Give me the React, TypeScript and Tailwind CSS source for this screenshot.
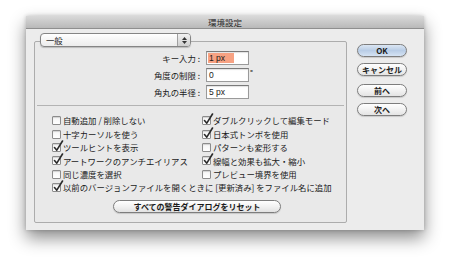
import React from 'react';

const font = { fontFamily: '"Noto Sans CJK JP", "Noto Sans", sans-serif' };

const leftChecks = [
  { label: '自動追加 / 削除しない', on: false },
  { label: '十字カーソルを使う', on: false },
  { label: 'ツールヒントを表示', on: true },
  { label: 'アートワークのアンチエイリアス', on: true },
  { label: '同じ濃度を選択', on: false },
];

const rightChecks = [
  { label: 'ダブルクリックして編集モード', on: true },
  { label: '日本式トンボを使用', on: true },
  { label: 'パターンも変形する', on: false },
  { label: '線幅と効果も拡大・縮小', on: true },
  { label: 'プレビュー境界を使用', on: false },
];

function Checkbox({ on }: { on: boolean }) {
  return (
    <span className="relative w-[9px] h-[9px] shrink-0 rounded-[1px] border border-[#8c8c8c] bg-gradient-to-b from-[#f4f4f4] to-white shadow-[inset_0_1px_1px_rgba(0,0,0,0.15)]">
      {on && (
        <svg className="absolute left-[0px] top-[-4px]" width="11" height="12" viewBox="0 0 11 12">
          <path d="M1.5 7.5 L3.8 10.2 L9.5 1" fill="none" stroke="#2a2a2a" strokeWidth="1.6" strokeLinecap="round" strokeLinejoin="round" />
        </svg>
      )}
    </span>
  );
}

function CheckRow({ label, on }: { label: string; on: boolean }) {
  return (
    <div className="h-[13.4px] flex items-center gap-[2px]">
      <Checkbox on={on} />
      <span className="leading-none whitespace-nowrap">{label}</span>
    </div>
  );
}

function PillButton({ children, primary }: { children: React.ReactNode; primary?: boolean }) {
  return (
    <div
      className={`w-[50px] h-[13px] rounded-full border border-[#7d7d7d] flex items-center justify-center text-[8px] font-bold leading-none text-[#1c1c1c] shadow-[0_1px_1px_rgba(0,0,0,0.15)] ${
        primary ? 'bg-gradient-to-b from-[#dbe6f3] via-[#b9cde6] to-[#d5e3f3]' : 'bg-gradient-to-b from-white via-[#f2f2f2] to-[#e4e4e4]'
      }`}
    >
      {children}
    </div>
  );
}

function Field({ label, value, selected, suffix }: { label: string; value: string; selected?: boolean; suffix?: string }) {
  return (
    <div className="h-[14px] flex items-center">
      <span className="w-[165px] mr-[6px] text-right leading-none whitespace-nowrap">{label}</span>
      <div className="w-[43px] h-[14px] bg-white border border-[#9a9a9a] border-t-[#7a7a7a] flex items-center pl-[1px] shadow-[inset_0_1px_1px_rgba(0,0,0,0.12)]">
        <span className={`leading-none px-[1px] py-[1px] text-[8.5px] ${selected ? 'bg-[#f7a283]' : ''}`} style={{ fontFamily: '"Liberation Sans", sans-serif' }}>
          {selected ? <span className="pr-[8px]">{value}</span> : value}
        </span>
      </div>
      {suffix && <span className="ml-[1px] leading-none text-[8px] -mt-[5px]">{suffix}</span>}
    </div>
  );
}

export default function App() {
  return (
    <div className="w-[450px] h-[266px] bg-white pl-[26px] pt-[16px] text-[8.4px] text-[#1a1a1a]" style={font}>
      <div className="w-[398px] h-[214px] bg-[#ececec] flex flex-col shadow-[0_8px_16px_rgba(0,0,0,0.45),0_0_4px_rgba(0,0,0,0.2)]">
        <div className="h-[13px] shrink-0 bg-gradient-to-b from-[#d9d9d9] to-[#b9b9b9] border-b border-[#8f8f8f] flex items-center justify-center">
          <span className="leading-none text-[8.5px] text-[#2a2a2a]">環境設定</span>
        </div>

        <div className="flex pl-[8px] pt-[4px]">
          <div className="w-[313px]">
            <div className="relative z-10 ml-[6px] w-[151px] h-[14px] rounded-[4px] border border-[#858585] bg-gradient-to-b from-white to-[#ececec] flex shadow-[0_1px_1px_rgba(0,0,0,0.2)]">
              <span className="flex-1 flex items-center pl-[5px] leading-none">一般</span>
              <span className="w-[13px] border-l border-[#a0a0a0] rounded-r-[3px] bg-gradient-to-b from-[#f2f2f2] to-[#cfcfcf] flex flex-col items-center justify-center gap-[1px]">
                <svg width="5" height="3" viewBox="0 0 5 3"><path d="M0 3 L2.5 0 L5 3 Z" fill="#333" /></svg>
                <svg width="5" height="3" viewBox="0 0 5 3"><path d="M0 0 L2.5 3 L5 0 Z" fill="#333" /></svg>
              </span>
            </div>

            <div className="-mt-[6px] h-[182px] border border-[#acacac] bg-[#e9e9e9] rounded-[2px]">
              <div className="pt-[9px] flex flex-col gap-[3px]">
                <Field label="キー入力 :" value="1 px" selected />
                <Field label="角度の制限 :" value="0" suffix="°" />
                <Field label="角丸の半径 :" value="5 px" />
              </div>

              <div className="mt-[6px] mx-[2px] h-px bg-[#b3b3b3]" />

              <div className="mt-[8px] pl-[17px]">
                <div className="flex">
                  <div className="w-[150px]">
                    {leftChecks.map((c) => (
                      <CheckRow key={c.label} label={c.label} on={c.on} />
                    ))}
                  </div>
                  <div>
                    {rightChecks.map((c) => (
                      <CheckRow key={c.label} label={c.label} on={c.on} />
                    ))}
                  </div>
                </div>
                <CheckRow label="以前のバージョンファイルを開くときに [更新済み] をファイル名に追加" on />
              </div>

              <div className="mt-[6px] ml-[78px] w-[168px] h-[13px] rounded-full border border-[#7d7d7d] bg-gradient-to-b from-white via-[#f2f2f2] to-[#e2e2e2] flex items-center justify-center text-[8px] font-bold leading-none shadow-[0_1px_1px_rgba(0,0,0,0.15)]">
                すべての警告ダイアログをリセット
              </div>
            </div>
          </div>

          <div className="ml-[10px] mt-[11px] flex flex-col">
            <PillButton primary>OK</PillButton>
            <div className="mt-[6px]"><PillButton>キャンセル</PillButton></div>
            <div className="mt-[8px]"><PillButton>前へ</PillButton></div>
            <div className="mt-[6px]"><PillButton>次へ</PillButton></div>
          </div>
        </div>
      </div>
    </div>
  );
}
